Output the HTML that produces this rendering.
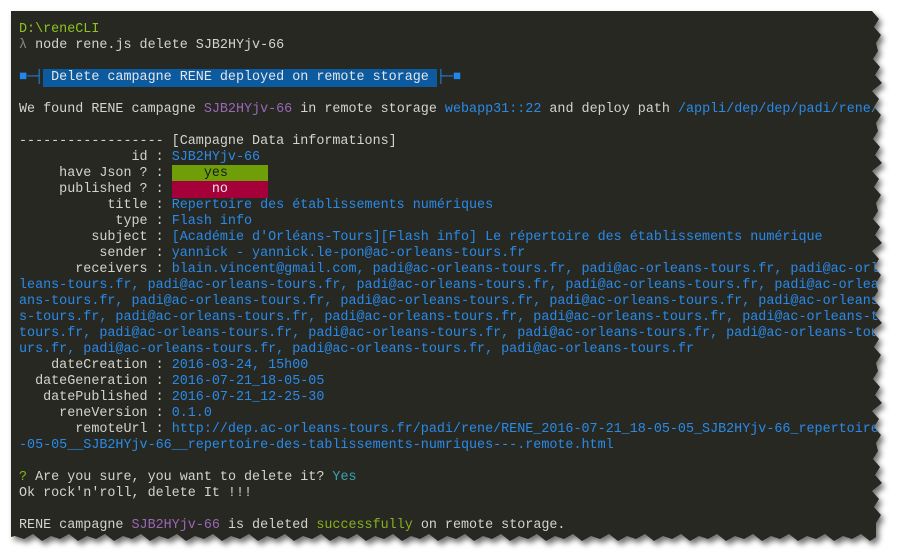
<!DOCTYPE html>
<html><head><meta charset="utf-8"><style>
html,body{margin:0;padding:0;background:#fff;width:902px;height:560px;overflow:hidden}
#wrap{position:absolute;left:0;top:0;width:902px;height:560px;filter:drop-shadow(3px 4px 3px rgba(0,0,0,.55))}
#term{position:absolute;left:11px;top:11px;width:873px;height:532px;background:#272822;overflow:hidden}
pre{margin:0;position:absolute;left:8px;top:11px;font-family:"Liberation Mono",monospace;font-size:13.4px;line-height:16px;color:#d4d4cc;white-space:pre}
.g{color:#8fc31f}.gr{color:#8a8a80}.p{color:#9a67b8}.b{color:#2a8ae8}.c{color:#36a4b8}.s{color:#86b01e}
.ban{background:#0c5aa0;color:#e6e6e6;padding:1px 0 2px}.bl{color:#1e88f0}
.y{background:#6e9f08;color:#1a1a1a;padding:1px 0}.n{background:#a5003a;color:#e8e8e8;padding:1px 0}
</style></head><body>
<div id="wrap"><div id="term"><pre><span class="g">D:\reneCLI</span>
<span class="gr">λ</span> node rene.js delete SJB2HYjv-66

<span class="bl">■─┤</span><span class="ban"> Delete campagne RENE deployed on remote storage </span><span class="bl">├─■</span>

We found RENE campagne <span class="p">SJB2HYjv-66</span> in remote storage <span class="b">webapp31::22</span> and deploy path <span class="b">/appli/dep/dep/padi/rene/</span>

------------------ [Campagne Data informations]
              id : <span class="b">SJB2HYjv-66</span>
     have Json ? : <span class="y">    yes     </span>
     published ? : <span class="n">     no     </span>
           title : <span class="b">Repertoire des établissements numériques</span>
            type : <span class="b">Flash info</span>
         subject : <span class="b">[Académie d'Orléans-Tours][Flash info] Le répertoire des établissements numérique</span>
          sender : <span class="b">yannick - yannick.le-pon@ac-orleans-tours.fr</span>
       receivers : <span class="b">blain.vincent@gmail.com, padi@ac-orleans-tours.fr, padi@ac-orleans-tours.fr, padi@ac-orle
leans-tours.fr, padi@ac-orleans-tours.fr, padi@ac-orleans-tours.fr, padi@ac-orleans-tours.fr, padi@ac-orleans-tours.fr
ans-tours.fr, padi@ac-orleans-tours.fr, padi@ac-orleans-tours.fr, padi@ac-orleans-tours.fr, padi@ac-orleans-tours.fr
s-tours.fr, padi@ac-orleans-tours.fr, padi@ac-orleans-tours.fr, padi@ac-orleans-tours.fr, padi@ac-orleans-tours.fr
tours.fr, padi@ac-orleans-tours.fr, padi@ac-orleans-tours.fr, padi@ac-orleans-tours.fr, padi@ac-orleans-tours.fr
urs.fr, padi@ac-orleans-tours.fr, padi@ac-orleans-tours.fr, padi@ac-orleans-tours.fr</span>
    dateCreation : <span class="b">2016-03-24, 15h00</span>
  dateGeneration : <span class="b">2016-07-21_18-05-05</span>
   datePublished : <span class="b">2016-07-21_12-25-30</span>
     reneVersion : <span class="b">0.1.0</span>
       remoteUrl : <span class="b">http://dep.ac-orleans-tours.fr/padi/rene/RENE_2016-07-21_18-05-05_SJB2HYjv-66_repertoire-des
-05-05__SJB2HYjv-66__repertoire-des-tablissements-numriques---.remote.html</span>

<span class="s">?</span> Are you sure, you want to delete it? <span class="c">Yes</span>
Ok rock'n'roll, delete It !!!

RENE campagne <span class="p">SJB2HYjv-66</span> is deleted <span class="s">successfully</span> on remote storage.</pre></div></div>
<script>
(function(){
 var w=873,h=532,pts=["0px 0px"],x,y;
 for(y=0;y<=h-14;y+=8){x=w-10+((y/8)%2?6:0)+((y*7)%5)-2;pts.push(x+"px "+y+"px");}
 pts.push((w-8)+"px "+(h-6)+"px");
 for(x=w-14;x>=0;x-=9){y=h-7+((x/9|0)%2?6:0)-((x*3)%4);pts.push(x+"px "+y+"px");}
 pts.push("0px "+(h-6)+"px");
 document.getElementById("term").style.clipPath="polygon("+pts.join(",")+")";
})();
</script>
</body></html>
